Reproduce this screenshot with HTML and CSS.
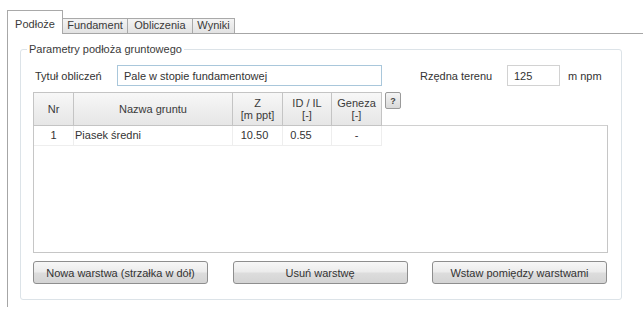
FILE: index.html
```html
<!DOCTYPE html>
<html lang="pl">
<head>
    <meta charset="UTF-8">
    <title>Podłoże</title>
    <link rel="stylesheet" href="styles.css">
</head>
<body>

    <div class="window">
        <div class="tabs">
            <div class="tab active tab-podloze">Podłoże</div>
            <div class="tab tab-fundament">Fundament</div>
            <div class="tab tab-obliczenia">Obliczenia</div>
            <div class="tab tab-wyniki">Wyniki</div>
        </div>

        <div class="panel">
            <fieldset class="group">
                <legend>Parametry podłoża gruntowego</legend>

                <div class="title-row">
                    <label class="lbl-title">Tytuł obliczeń</label>
                    <input type="text" class="inp-title" value="Pale w stopie fundamentowej">
                    <label class="lbl-level">Rzędna terenu</label>
                    <input type="text" class="inp-level" value="125">
                    <span class="unit">m npm</span>
                </div>

                <div class="grid-head">
                    <div class="hcell c-nr">Nr</div>
                    <div class="hcell c-name">Nazwa gruntu</div>
                    <div class="hcell c-z">Z<br>[m ppt]</div>
                    <div class="hcell c-id">ID / IL<br>[-]</div>
                    <div class="hcell c-gen">Geneza<br>[-]</div>
                    <button class="help">?</button>
                </div>

                <div class="grid-body">
                    <div class="grid-row">
                        <div class="cell c-nr">1</div>
                        <div class="cell c-name left">Piasek średni</div>
                        <div class="cell c-z num-z">10.50</div>
                        <div class="cell c-id num-id">0.55</div>
                        <div class="cell c-gen">-</div>
                    </div>
                </div>

                <div class="actions">
                    <button class="btn">Nowa warstwa (strzałka w dół)</button>
                    <button class="btn">Usuń warstwę</button>
                    <button class="btn">Wstaw pomiędzy warstwami</button>
                </div>
            </fieldset>
        </div>
    </div>

</body>
</html>
```

FILE: styles.css
```css
body { margin: 0; background: #fff; font-family: "Liberation Sans", Arial, sans-serif; font-size: 11px; color: #333; }
.window { padding: 10px 0 0 7px; }

/* tabs */
.tabs { display: flex; align-items: flex-end; height: 23px; }
.tab { box-sizing: border-box; height: 15px; line-height: 13px; text-align: center; border: 1px solid #a9a9a9; border-bottom: 0; margin-left: -1px; background: linear-gradient(#f4f4f4, #e2e2e2); color: #3a3a3a; }
.tab.active { height: 24px; margin-left: 0; margin-bottom: -1px; padding-top: 7px; background: #fff; position: relative; border-color: #a9a9a9; }
.tab-podloze { width: 56px; }
.tab-fundament { width: 66px; }
.tab-obliczenia { width: 66px; }
.tab-wyniki { width: 43px; }

.panel { width: 625px; border: 1px solid #a6a6a6; border-bottom: 0; padding: 9px 11px 7px 12px; }

/* group box */
.group { margin: 0; width: 575px; border: 1px solid #dce3e8; border-radius: 3px; padding: 0 13px 15px 12px; }
.group legend { padding: 0 2px; margin-left: -6px; color: #3a3a3a; }

.title-row { display: flex; align-items: center; height: 21px; margin-top: 10px; }
.title-row input { box-sizing: border-box; height: 21px; font: inherit; color: #333; padding: 0 6px; outline: none; }
.lbl-title { width: 82px; margin-left: 2px; }
.inp-title { width: 265px; border: 1px solid #a9c7db; }
.lbl-level { width: 87px; margin-left: 38px; }
.inp-level { width: 53px; border: 1px solid #d2d2d2; }
.unit { margin-left: 8px; }

/* grid */
.grid-head { display: flex; align-items: flex-start; margin-top: 6px; }
.hcell { box-sizing: border-box; height: 34px; display: flex; align-items: center; justify-content: center; text-align: center; line-height: 12px; border: 1px solid #c4c4c4; border-left: 0; background: linear-gradient(#f7f7f7, #e6e6e6); color: #3a3a3a; }
.hcell.c-nr { border-left: 1px solid #c4c4c4; }
.c-nr { width: 41px; }
.c-name { width: 159px; }
.c-z { width: 50px; }
.c-id { width: 49px; }
.c-gen { width: 50px; }
.help { box-sizing: border-box; width: 16px; height: 17px; margin-left: 3px; padding: 0; border: 1px solid #9a9a9a; border-radius: 2px; background: linear-gradient(#f5f5f5, #d9d9d9); font: bold 9px "Liberation Sans", Arial, sans-serif; color: #444; }

.grid-body { box-sizing: border-box; height: 128px; border: 1px solid #c6c6c6; border-top-color: #d0d0d0; margin-top: -1px; background: #fff; }
.grid-row { display: flex; height: 20px; }
.cell { box-sizing: border-box; line-height: 19px; text-align: center; border-right: 1px solid #eeeeee; border-bottom: 1px solid #eeeeee; }
.cell.c-nr { width: 40px; }
.cell.left { text-align: left; padding-left: 1px; }
.num-z { padding-right: 6px; }
.num-id { padding-right: 12px; }

/* buttons */
.actions { display: flex; justify-content: space-between; margin-top: 8px; width: 574px; }
.btn { box-sizing: border-box; width: 175px; height: 23px; border: 1px solid #8e8e8e; border-radius: 3px; background: linear-gradient(#f7f7f7 0%, #ececec 45%, #dcdcdc 55%, #d4d4d4 100%); font: inherit; color: #333; padding: 0; }
```
